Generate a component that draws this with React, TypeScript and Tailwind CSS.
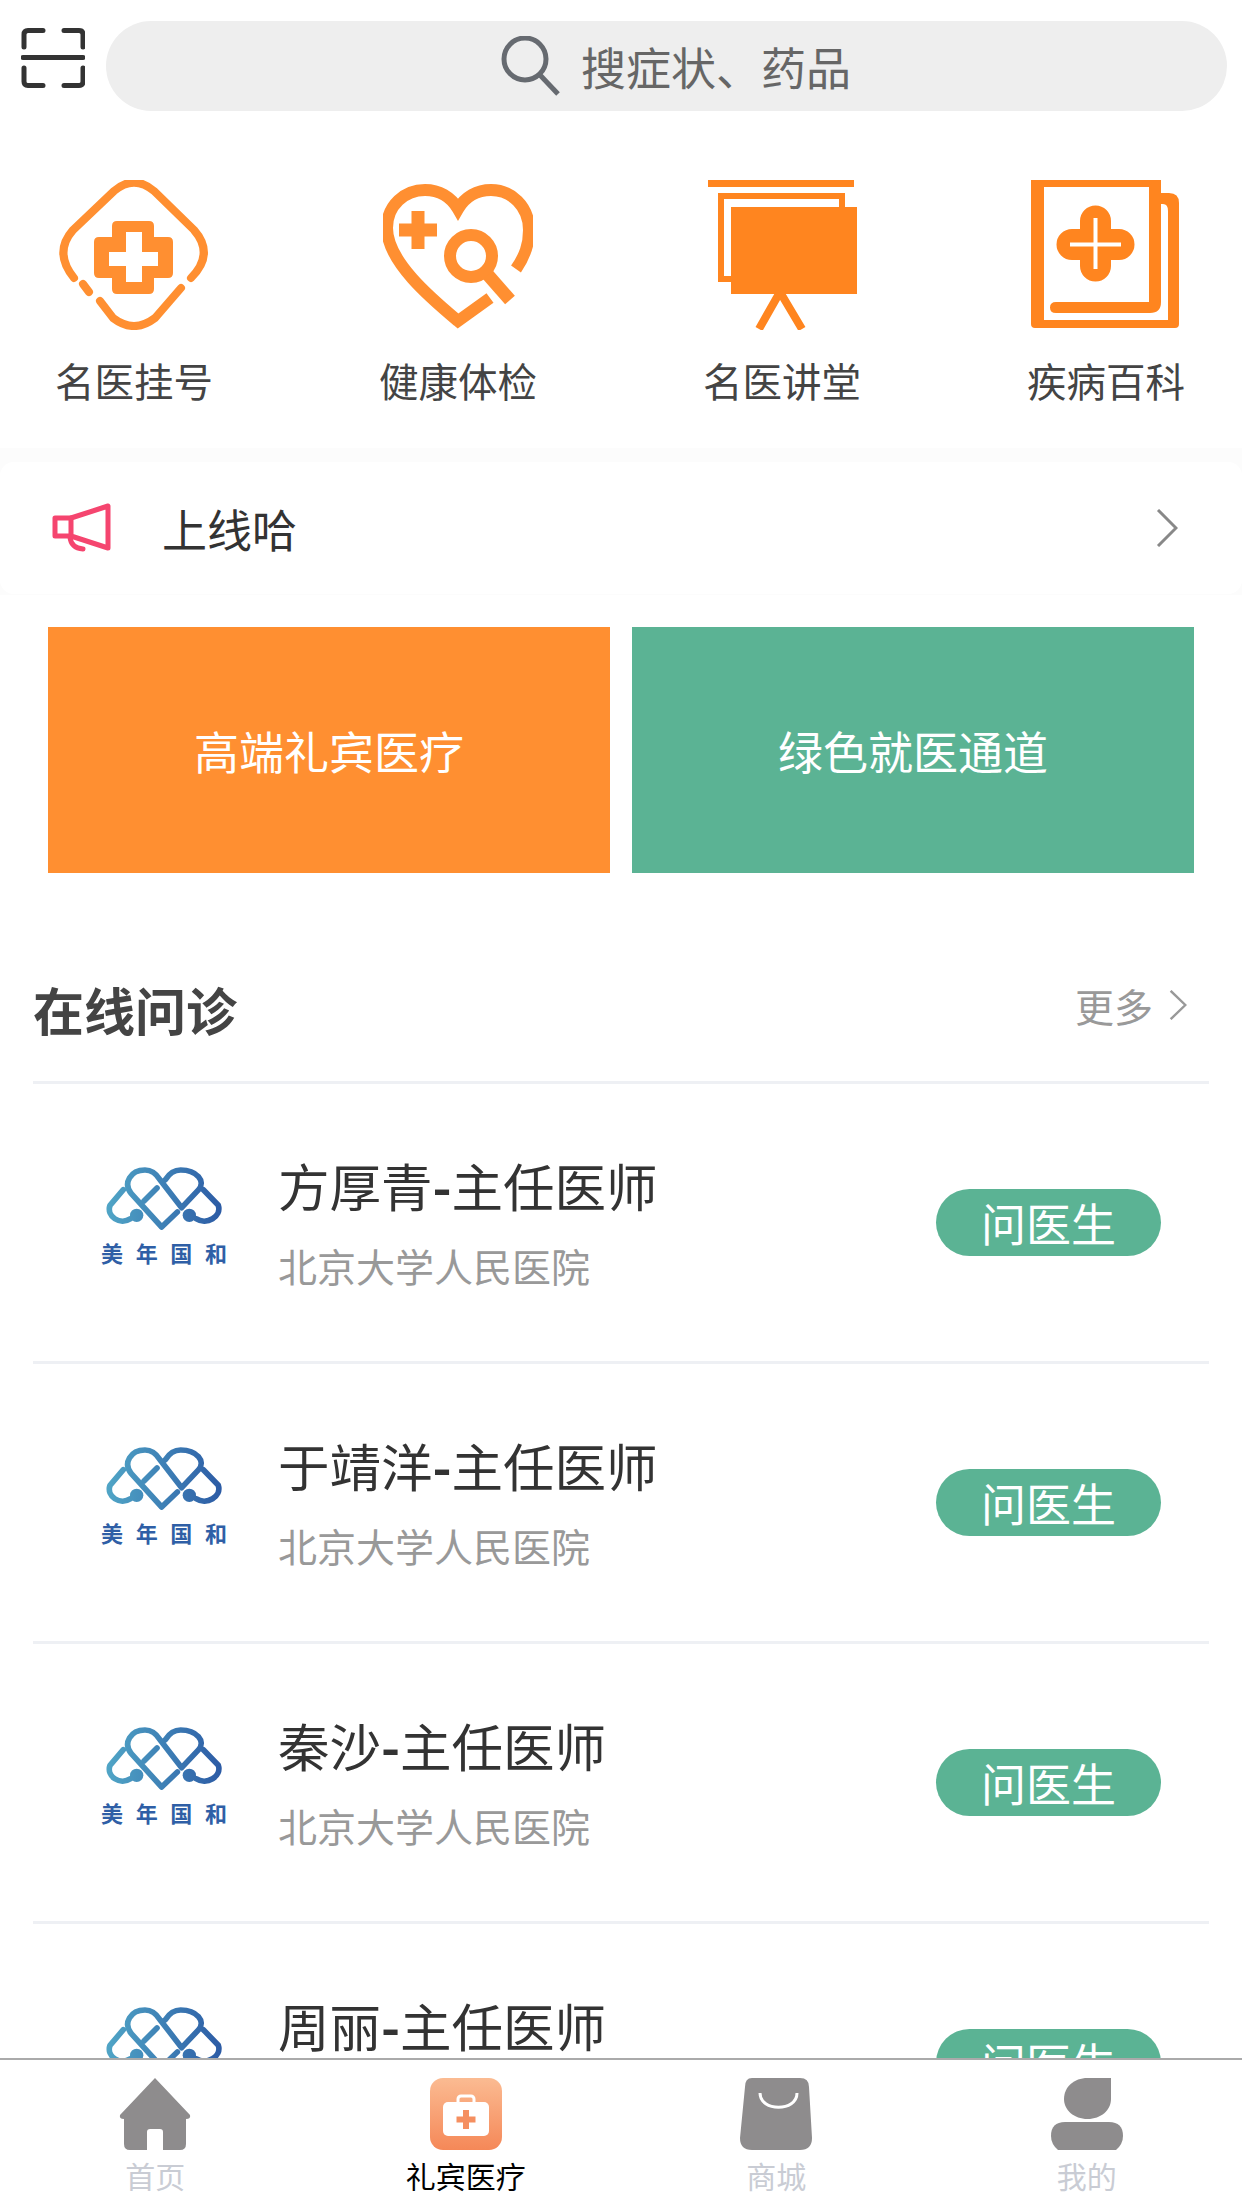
const orange = '#FF8F31';

const shortcuts = ['名医挂号', '健康体检', '名医讲堂', '疾病百科'];
const doctors = ['方厚青', '于靖洋', '秦沙', '周丽'];

function ScanIcon() {
  return (
    <svg width="64" height="60" viewBox="0 0 64 60" fill="none" stroke="#333" strokeWidth="5" strokeLinecap="round" className="mt-[7px] shrink-0 self-start">
      <path d="M22 2.500H7Q3 2.500 3 6.500V19" />
      <path d="M43 2.500H58Q62 2.500 62 6.500V19" />
      <path d="M3 40V53.500Q3 57.500 7 57.500H22" />
      <path d="M62 40V53.500Q62 57.500 58 57.500H43" />
      <path d="M2 29.500H62" />
    </svg>
  );
}

function SearchIcon() {
  return (
    <svg width="60" height="60" viewBox="0 0 60 60" fill="none" stroke="#666a70" strokeWidth="5">
      <circle cx="25" cy="23" r="21" />
      <path d="M40 39L58 58" />
    </svg>
  );
}

function ClinicIcon() {
  return (
    <svg width="150" height="150" viewBox="0 0 150 150" fill="none">
      <g stroke={orange} strokeWidth="8" strokeLinecap="round">
        <path d="M15 98C2 82 0 66 14 50L55 11Q75 -6 95 11L135 50C149 66 148 82 132 98" />
        <path d="M122 108L96 138Q75 154 54 138L41 121" />
        <path d="M24 104L30 112" />
      </g>
      <path fill={orange} d="M58 41H90Q95 41 95 46V57H109Q114 57 114 62V93Q114 98 109 98H95V109Q95 114 90 114H58Q53 114 53 109V98H40Q35 98 35 93V62Q35 57 40 57H53V46Q53 41 58 41Z" />
      <path fill="#fff" d="M67 52H83V72H99V86H83V102H67V86H50V72H67Z" />
    </svg>
  );
}

function HeartCheckIcon() {
  return (
    <svg width="150" height="150" viewBox="0 0 150 150" fill="none">
      <g stroke={orange}>
        <path strokeWidth="12" d="M107 118L75 141C50 120 4 82 4 48C4 25 22 10 42 10C56 10 68 17 75 29C82 17 94 10 108 10C128 10 146 26 146 50C146 65 142 76 133 89" />
        <circle cx="88" cy="76" r="21" strokeWidth="12" />
        <path strokeWidth="13" d="M105 95L127 120" />
        <path strokeWidth="13" d="M35 31V69M16 50H54" />
      </g>
    </svg>
  );
}

function LectureIcon() {
  return (
    <svg width="155" height="150" viewBox="0 0 155 150" fill="none">
      <path fill="#FF851F" d="M3 0H149V7H3Z" />
      <path stroke="#FF851F" strokeWidth="6" d="M16 16H137V99H16Z" />
      <path fill="#FF851F" d="M26 27H152V114H26Z" />
      <path stroke="#FF851F" strokeWidth="8" d="M75 112L54 149M75 112L97 149" />
    </svg>
  );
}

function WikiIcon() {
  return (
    <svg width="150" height="150" viewBox="0 0 150 150" fill="none">
      <path fill="#FF851F" d="M0 0H130V13H138Q148 13 148 23V144Q148 148 144 148H4Q0 148 0 144ZM13 7V140H137V31Q137 24 132 24H130V122Q130 133 119 133H25Q19 133 19 127.500Q19 122 25 122H118V7Z" />
      <path stroke="#FF851F" strokeWidth="31" strokeLinecap="round" d="M64.500 41V86M41 64.500H88" />
      <path stroke="#fff" strokeWidth="4" d="M64.500 38V89M39 64.500H90" />
    </svg>
  );
}

function Megaphone() {
  return (
    <svg width="60" height="50" viewBox="0 0 60 50" fill="none" stroke="#F5456F" strokeWidth="5" strokeLinejoin="round" strokeLinecap="round" className="shrink-0">
      <path d="M19 15L56 3V45L19 33Z" />
      <path d="M19 15H3V33H19" />
      <path d="M18 34Q19 45 31 46" />
    </svg>
  );
}

function Chevron({ w, h, color }: { w: number; h: number; color: string }) {
  return (
    <svg width={w} height={h} viewBox="0 0 22 38" fill="none" stroke={color} strokeWidth="3" className="shrink-0" preserveAspectRatio="none">
      <path d="M2 1L20 19L2 37" />
    </svg>
  );
}

function HospitalLogo({ id }: { id: string }) {
  return (
    <div className="mt-[-14px] flex w-[126px] shrink-0 flex-col items-center">
      <svg width="118" height="63" viewBox="45 50 354 189" fill="none">
        <defs>
          <linearGradient id={id} gradientUnits="userSpaceOnUse" x1="50" y1="0" x2="395" y2="0">
            <stop offset="0" stopColor="#50A5C6" />
            <stop offset="1" stopColor="#2C5BA5" />
          </linearGradient>
        </defs>
        <g stroke={`url(#${id})`} strokeWidth="17" strokeLinecap="round" strokeLinejoin="round">
          <path d="M262 185L215 230L124 130C98 98 122 59 165 59C188 59 200 72 210 88L275 172L326 118C348 92 320 59 272 59C250 59 236 72 226 88" />
          <path d="M201 113L162 152" />
          <path d="M100 118L60 165C48 198 90 226 122 205" />
          <path d="M340 118L385 165C396 198 350 226 318 205" />
        </g>
        <circle cx="140" cy="195" r="20" fill={`url(#${id})`} />
        <circle cx="298" cy="195" r="20" fill={`url(#${id})`} />
      </svg>
      <div className="mt-[10px] flex w-full justify-between text-[22px] leading-[24px] font-bold text-[#2F5FA6]">
        <span>美</span>
        <span>年</span>
        <span>国</span>
        <span>和</span>
      </div>
    </div>
  );
}

function DoctorRow({ name, index }: { name: string; index: number }) {
  return (
    <div className="mx-[33px] flex h-[280px] items-center border-b-[3px] border-[#eef0f4] pr-[48px] pl-[68px]">
      <HospitalLogo id={`logo-${index}`} />
      <div className="ml-[51px] min-w-0 flex-1">
        <div className="text-[51.5px] leading-[60px] text-[#333]">
          {name}<span className="font-bold">-</span>主任医师
        </div>
        <div className="mt-[25px] text-[39px] leading-[50px] text-[#999]">北京大学人民医院</div>
      </div>
      <div className="flex h-[67px] w-[225px] items-center justify-center rounded-full bg-[#5BB394] text-[45px] leading-none text-white">
        问医生
      </div>
    </div>
  );
}

function HomeTab() {
  return (
    <svg width="72" height="72" viewBox="0 0 72 72" fill="#8E8C8D">
      <path d="M36 0L71 37Q72 41 67 41V66Q67 72 61 72H44V54Q44 51 41 51H31Q28 51 28 54V72H11Q5 72 5 66V41Q0 41 1 37Z" />
    </svg>
  );
}

function CareTab() {
  return (
    <svg width="72" height="72" viewBox="0 0 72 72">
      <defs>
        <linearGradient id="care-bg" x1="0" y1="0" x2="0" y2="1">
          <stop offset="0" stopColor="#FBBB92" />
          <stop offset="1" stopColor="#F58858" />
        </linearGradient>
      </defs>
      <rect width="72" height="72" rx="13" fill="url(#care-bg)" />
      <rect x="28" y="18" width="16" height="12" rx="3" fill="none" stroke="#fff" strokeWidth="3" />
      <rect x="13" y="24" width="46" height="34" rx="5" fill="#fff" />
      <path d="M36 32V51M26.500 41.500H45.500" stroke="#F58F60" strokeWidth="6" />
    </svg>
  );
}

function ShopTab() {
  return (
    <svg width="72" height="72" viewBox="0 0 72 72" fill="none">
      <path fill="#8E8C8D" d="M12 0H60Q69 0 69 9L72 60Q72 72 60 72H12Q0 72 0 60L5 9Q5 0 12 0Z" />
      <path d="M20 15C20 34 57 34 57 15" stroke="#fff" strokeWidth="3" />
    </svg>
  );
}

function MineTab() {
  return (
    <svg width="72" height="72" viewBox="0 0 72 72" fill="#8E8C8D">
      <path d="M36.500 0H60V21C60 32 50 41 36.500 41C23 41 13 32 13 21C13 9 23 0 36.500 0Z" />
      <path d="M14 44H58Q72 44 72 58Q72 66 65 72H7Q0 66 0 58Q0 44 14 44Z" />
    </svg>
  );
}

function Tab({ label, active, children }: { label: string; active?: boolean; children: React.ReactNode }) {
  return (
    <div className="flex flex-1 flex-col items-center">
      {children}
      <span className={`mt-[5px] text-[30px] leading-[40px] ${active ? 'text-black' : 'text-[#c9ccd4]'}`}>{label}</span>
    </div>
  );
}

export default function App() {
  const icons = [<ClinicIcon />, <HeartCheckIcon />, <LectureIcon />, <WikiIcon />];

  return (
    <div className="relative h-[2208px] w-[1242px] overflow-hidden bg-white font-['Noto_Sans_CJK_SC','Liberation_Sans',sans-serif]">
      {/* Search bar */}
      <div className="flex items-center pt-[21px] pr-[15px] pl-[21px]">
        <ScanIcon />
        <div className="ml-[21px] flex h-[90px] flex-1 items-center justify-center rounded-full bg-[#eeeeee] pl-[18px]">
          <SearchIcon />
          <span className="ml-[21px] text-[45px] leading-none text-[#666]">搜症状、药品</span>
        </div>
      </div>

      {/* Shortcuts */}
      <div className="mt-[69px] flex">
        {shortcuts.map((label, i) => (
          <div key={label} className="flex w-[324px] shrink-0 flex-col items-center first:ml-[-28px]">
            <div className="flex h-[150px] items-center justify-center">{icons[i]}</div>
            <span className="mt-[24px] text-[39.5px] leading-[52px] text-[#444]">{label}</span>
          </div>
        ))}
      </div>

      {/* Notice */}
      <div className="mt-[42px] bg-[#fcfcfc] pt-[14px] pb-[1px]">
        <div className="flex h-[132px] items-center rounded-[14px] bg-white pr-[64px] pl-[52px]">
          <Megaphone />
          <span className="ml-[50px] flex-1 text-[45px] leading-none text-[#333]">上线哈</span>
          <Chevron w={22} h={38} color="#888" />
        </div>
      </div>

      {/* Entry cards */}
      <div className="mt-[32px] grid grid-cols-2 gap-[22px] px-[48px]">
        <div className="flex h-[246px] items-center justify-center bg-[#FF8F31] text-[45px] leading-none text-white">高端礼宾医疗</div>
        <div className="flex h-[246px] items-center justify-center bg-[#5BB394] text-[45px] leading-none text-white">绿色就医通道</div>
      </div>

      {/* Online consult */}
      <div className="mx-[33px] mt-[106px] flex h-[105px] items-center justify-between border-b-[3px] border-[#eef0f4] pb-[42px]">
        <span className="text-[51px] leading-none font-bold text-[#444]">在线问诊</span>
        <div className="mr-[22px] mb-[8px] flex items-center">
          <span className="text-[39px] leading-none text-[#999]">更多</span>
          <span className="ml-[16px]">
            <Chevron w={18} h={30} color="#999" />
          </span>
        </div>
      </div>
      {doctors.map((name, i) => (
        <DoctorRow key={name} name={name} index={i} />
      ))}

      {/* Tab bar */}
      <div className="absolute inset-x-0 bottom-0 flex h-[150px] border-t-2 border-[#aaa] bg-white pt-[18px]">
        <Tab label="首页"><HomeTab /></Tab>
        <Tab label="礼宾医疗" active><CareTab /></Tab>
        <Tab label="商城"><ShopTab /></Tab>
        <Tab label="我的"><MineTab /></Tab>
      </div>
    </div>
  );
}
